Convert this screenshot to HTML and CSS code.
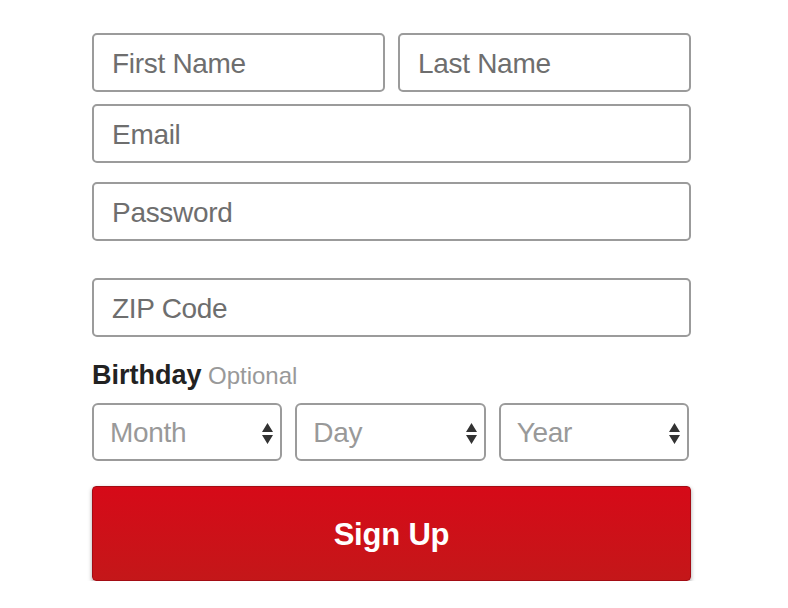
FILE: index.html
```html
<!DOCTYPE html>
<html>
<head>
<meta charset="utf-8">
<link rel="stylesheet" href="styles.css">
</head>
<body>
<form class="form">
  <div class="row">
    <input class="field" type="text" placeholder="First Name">
    <input class="field" type="text" placeholder="Last Name">
  </div>
  <input class="field email" type="email" placeholder="Email">
  <input class="field password" type="password" placeholder="Password">
  <input class="field zip" type="text" placeholder="ZIP Code">
  <div class="label"><span class="label-main">Birthday</span> <span class="label-opt">Optional</span></div>
  <div class="selects">
    <div class="select"><span>Month</span><svg class="arrows" width="11" height="21" viewBox="0 0 11 21"><path d="M5.5 0 L11 9 L0 9 Z M0 12 L11 12 L5.5 21 Z" fill="#333"/></svg></div>
    <div class="select"><span>Day</span><svg class="arrows" width="11" height="21" viewBox="0 0 11 21"><path d="M5.5 0 L11 9 L0 9 Z M0 12 L11 12 L5.5 21 Z" fill="#333"/></svg></div>
    <div class="select"><span>Year</span><svg class="arrows" width="11" height="21" viewBox="0 0 11 21"><path d="M5.5 0 L11 9 L0 9 Z M0 12 L11 12 L5.5 21 Z" fill="#333"/></svg></div>
  </div>
  <button class="submit" type="button">Sign Up</button>
</form>
</body>
</html>
```
FILE: styles.css
```css
html, body {
  margin: 0;
  padding: 0;
  background: #fff;
}
body {
  font-family: "Liberation Sans", Arial, Helvetica, sans-serif;
}
.form {
  width: 599px;
  margin: 33px 0 0 92px;
  display: flex;
  flex-direction: column;
}
.row {
  display: flex;
  gap: 13px;
}
.row .field {
  flex: 1;
  min-width: 0;
}
.field {
  box-sizing: border-box;
  height: 59px;
  width: 100%;
  border: 2px solid #9b9b9b;
  border-radius: 5px;
  padding: 2px 18px 0;
  font-family: "Liberation Sans", Arial, sans-serif;
  font-size: 28px;
  letter-spacing: -0.3px;
  color: #444;
  background: #fff;
  outline: none;
}
.field::placeholder {
  color: #6e6e6e;
  opacity: 1;
}
.email {
  margin-top: 12px;
}
.password {
  margin-top: 19px;
}
.zip {
  margin-top: 37px;
}
.label {
  margin-top: 22px;
  height: 32px;
  line-height: 32px;
}
.label-main {
  font-size: 27px;
  font-weight: bold;
  color: #222;
}
.label-opt {
  font-size: 24px;
  color: #999;
  margin-left: 2px;
}
.selects {
  margin-top: 12px;
  width: 597px;
  display: flex;
  gap: 13px;
}
.select {
  box-sizing: border-box;
  flex: 1;
  height: 58px;
  border: 2px solid #9b9b9b;
  border-radius: 6px;
  padding: 2px 7px 0 16px;
  display: flex;
  align-items: center;
  justify-content: space-between;
  font-size: 28px;
  letter-spacing: -0.3px;
  color: #999;
}
.arrows {
  display: block;
}
.submit {
  margin-top: 25px;
  height: 95px;
  width: 100%;
  border: 1px solid #a30c14;
  border-radius: 4px;
  background: linear-gradient(#d60a18, #c41719);
  box-shadow: 0 2px 4px rgba(0, 0, 0, 0.35);
  color: #fff;
  font-family: "Liberation Sans", Arial, sans-serif;
  font-size: 31px;
  font-weight: bold;
  letter-spacing: -0.2px;
  padding-top: 3px;
  cursor: pointer;
}
```
